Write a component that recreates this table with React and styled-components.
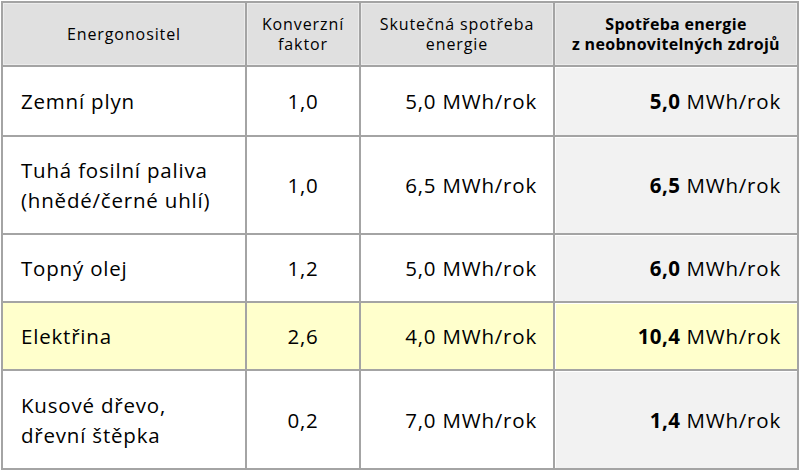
import React from 'react'
import styled, { createGlobalStyle } from 'styled-components'

const GlobalStyle = createGlobalStyle`
  html, body {
    margin: 0;
    padding: 0;
    background: #ffffff;
  }
  body {
    font-family: "Open Sans", "Noto Sans", sans-serif;
    color: #000000;
  }
`

const Wrap = styled.div`
  padding: 1px 0 0 1px;
`

const Table = styled.table`
  border-collapse: collapse;
  table-layout: fixed;
  width: 796px;
`

const HeadCell = styled.th`
  height: 62px;
  padding: 0 6px;
  background: #e0e0e0;
  border: 2px solid #a4a4a4;
  box-shadow: inset 0 0 0 1px #ececec;
  font-size: 16px;
  line-height: 20px;
  font-weight: ${p => (p.$bold ? 700 : 400)};
  letter-spacing: ${p => (p.$bold ? '0.3px' : '0.9px')};
  text-align: center;
  vertical-align: middle;
  color: #000000;
`

const Row = styled.tr`
  height: ${p => p.$h}px;
  background: ${p => (p.$highlight ? '#ffffcc' : '#ffffff')};
`

const Cell = styled.td`
  border: 2px solid #a4a4a4;
  padding: ${p => (p.$align === 'left' ? '0 8px 0 18px' : p.$align === 'right' ? '0 16px 0 6px' : '0 6px')};
  text-align: ${p => p.$align};
  vertical-align: middle;
  font-size: 20.5px;
  letter-spacing: 0.8px;
  line-height: 30px;
  white-space: pre;
  background: ${p => (p.$shade && !p.$highlight ? '#f2f2f2' : 'transparent')};
  box-shadow: ${p => (p.$shade ? 'inset 1px 1px 0 #ffffff' : 'none')};
`

const Num = styled.b`
  font-weight: 700;
  letter-spacing: 0.4px;
`

const rows = [
  { name: ['Zemní plyn'], factor: '1,0', real: '5,0', total: '5,0', h: 70 },
  { name: ['Tuhá fosilní paliva', '(hnědé/černé uhlí)'], factor: '1,0', real: '6,5', total: '6,5', h: 98 },
  { name: ['Topný olej'], factor: '1,2', real: '5,0', total: '6,0', h: 68 },
  { name: ['Elektřina'], factor: '2,6', real: '4,0', total: '10,4', h: 68, highlight: true },
  { name: ['Kusové dřevo,', 'dřevní štěpka'], factor: '0,2', real: '7,0', total: '1,4', h: 99 },
]

export default function App() {
  return (
    <Wrap>
      <GlobalStyle />
      <Table>
        <colgroup>
          <col style={{ width: 244 }} />
          <col style={{ width: 114 }} />
          <col style={{ width: 194 }} />
          <col style={{ width: 244 }} />
        </colgroup>
        <thead>
          <tr>
            <HeadCell>Energonositel</HeadCell>
            <HeadCell>Konverzní<br />faktor</HeadCell>
            <HeadCell>Skutečná spotřeba<br />energie</HeadCell>
            <HeadCell $bold>Spotřeba energie<br />z neobnovitelných zdrojů</HeadCell>
          </tr>
        </thead>
        <tbody>
          {rows.map(r => (
            <Row key={r.name[0]} $h={r.h} $highlight={r.highlight}>
              <Cell $align="left">
                {r.name.map((line, i) => (
                  <React.Fragment key={i}>
                    {i > 0 && <br />}
                    {line}
                  </React.Fragment>
                ))}
              </Cell>
              <Cell $align="center">{r.factor}</Cell>
              <Cell $align="right">{r.real} MWh/rok</Cell>
              <Cell $align="right" $shade $highlight={r.highlight}>
                <Num>{r.total}</Num> MWh/rok
              </Cell>
            </Row>
          ))}
        </tbody>
      </Table>
    </Wrap>
  )
}
